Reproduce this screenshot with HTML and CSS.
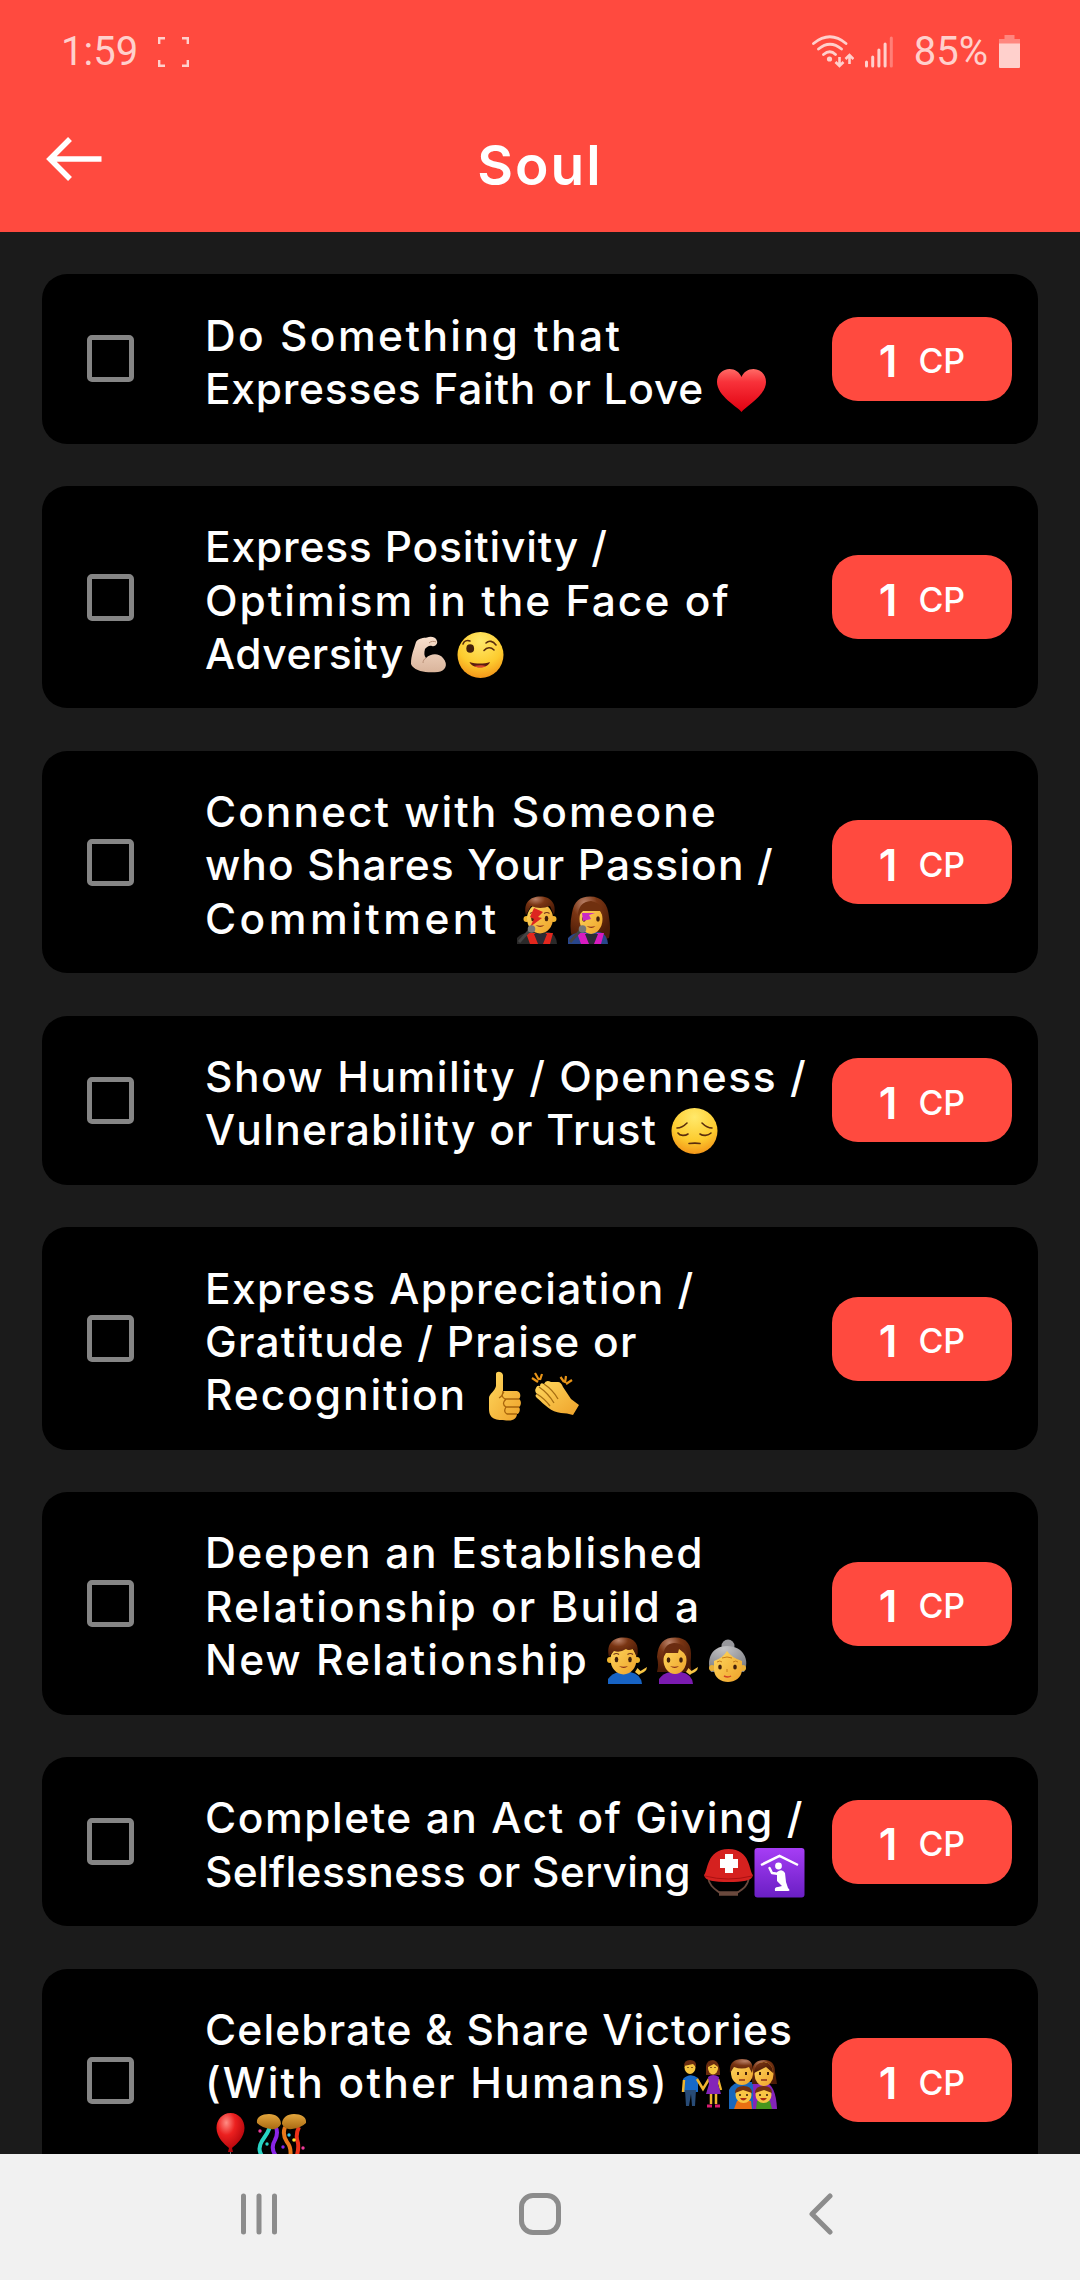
FILE: index.html
```html
<!DOCTYPE html>
<html lang="en">
<head>
<meta charset="utf-8">
<title>Soul</title>
<link rel="stylesheet" href="styles.css">
</head>
<body>
<svg class="defs" aria-hidden="true">
  <defs>
    <linearGradient id="g-heart" x1="0" y1="0" x2="0" y2="1"><stop offset="0" stop-color="#ff6b66"/><stop offset=".3" stop-color="#f8323a"/><stop offset="1" stop-color="#e10010"/></linearGradient>
    <radialGradient id="g-face" cx=".5" cy=".2" r=".85"><stop offset="0" stop-color="#ffe96b"/><stop offset=".6" stop-color="#fdcb2e"/><stop offset="1" stop-color="#f28d15"/></radialGradient>
    <linearGradient id="g-skin" x1="0" y1="0" x2="1" y2="1"><stop offset="0" stop-color="#ffd85e"/><stop offset="1" stop-color="#eea22a"/></linearGradient>
    <linearGradient id="g-pale" x1="0" y1="0" x2="0" y2="1"><stop offset="0" stop-color="#f9e0cd"/><stop offset="1" stop-color="#d9b49b"/></linearGradient>
    <radialGradient id="g-hair" cx=".35" cy=".15" r=".8"><stop offset="0" stop-color="#b98067"/><stop offset=".4" stop-color="#7a3513"/><stop offset="1" stop-color="#4d1c07"/></radialGradient>
    <radialGradient id="g-grey" cx=".4" cy=".1" r=".9"><stop offset="0" stop-color="#c4c4c6"/><stop offset="1" stop-color="#7c7d82"/></radialGradient>
    <linearGradient id="g-purple" x1="0" y1="0" x2="0" y2="1"><stop offset="0" stop-color="#a63df5"/><stop offset="1" stop-color="#6a1fc4"/></linearGradient>
    <radialGradient id="g-balloon" cx=".35" cy=".25" r=".8"><stop offset="0" stop-color="#ff8d84"/><stop offset=".4" stop-color="#ec201f"/><stop offset="1" stop-color="#a80008"/></radialGradient>
    <linearGradient id="g-gold" x1="0" y1="0" x2="0" y2="1"><stop offset="0" stop-color="#e3a63d"/><stop offset="1" stop-color="#a96a12"/></linearGradient>
  </defs>
  <symbol id="heart" viewBox="0 0 51 50"><path fill="url(#g-heart)" d="M25.500 47C22 42 1 31 1 17C1 9 7 4 13.500 4C19 4 23.500 7 25.500 12C27.500 7 32 4 37.500 4C44 4 50 9 50 17C50 31 29 42 25.500 47Z"/></symbol>
  <symbol id="biceps" viewBox="0 0 51 50"><path fill="url(#g-pale)" d="M7 34C7 25 10 19 12 12C14 8 20 8 23 7.500C27 6 32 7 33 11C34 14 31 17 28 16C25 15 23 17 21 19C20 23 20 26 22 28C27 23 35 23 39 28C45 35 41 41 34 42C24 43 13 42 8 36Z"/><path fill="none" stroke="#b78e76" d="M22 28C20 29 19 31 19 33M25 13c2-2 5-2 7-1"/></symbol>
  <symbol id="wink" viewBox="0 0 51 50"><circle cx="25.500" cy="25" r="23" fill="url(#g-face)"/><ellipse cx="15.200" cy="18.500" rx="3.900" ry="4.300" fill="#43200b"/><g fill="none" stroke="#5a2d0d" stroke-width="1.600" stroke-linecap="round"><path d="M8 14C9 11 12 10 15 11M31 13C34 10 38 11 41 15M29 20.500C32 17 36 17 39 20"/></g><path fill="#5b1d10" d="M14.500 32C21 34 29 34 35 32C33 39 17 39 14.500 32Z"/><path fill="#d9462f" d="M19 36C23 38 28 38 31 36C28 35 23 35 19 36Z"/></symbol>
  <symbol id="pensive" viewBox="0 0 51 50"><circle cx="25.500" cy="25" r="23" fill="url(#g-face)"/><g fill="none" stroke="#5a2d0d" stroke-width="1.600" stroke-linecap="round"><path d="M8 22C12 22 15 20 18 17M33 17C36 20 39 22 43 22M9 27C11 30 16 30 19 28M31 28C34 30 39 30 42 27M20 37.500C24 37 28 37 31 37.500"/></g></symbol>
  <symbol id="person-face" viewBox="0 0 51 50"><circle cx="9" cy="24" r="3" fill="#f0b52d"/><circle cx="36" cy="24" r="3" fill="#f0b52d"/><ellipse cx="22.500" cy="23.500" rx="13" ry="15" fill="url(#g-skin)"/><ellipse cx="15.500" cy="23.500" rx="1.800" ry="2.700" fill="#43200b"/><ellipse cx="29" cy="23.500" rx="1.800" ry="2.700" fill="#43200b"/><path fill="none" stroke="#72351b" stroke-width="1.200" d="M12.500 18.500q3-2 5.500 0M26.500 18.500q3-2 5.500 0"/><path fill="#8c2f18" d="M18 30q4.500 1.500 9 0q-4 4-9 0z"/></symbol>
  <symbol id="man-singer" viewBox="0 0 51 50"><path fill="#2a2929" d="M5 49V43Q9 38 19 37H37Q44 39 45 49Z"/><path fill="#e3271d" d="M14 38H23L28 49H18ZM41 38H34L29 49H38Z"/><path fill="#2b2b35" d="M22 39H35L31 49H26Z"/><use href="#person-face" x="5.500" width="51" height="50"/><path fill="url(#g-hair)" d="M14 20C11 8 18 1.500 28 1.500C39 1.500 45 9 42 20L38 11Q28 15 19 11Z"/><path fill="#dd2520" d="M22 13L31 17L26 22L30 23L18 32L22 24L18 22Z"/><path stroke="#444" stroke-width="3" d="M7 47L17 36"/><circle cx="19.500" cy="34" r="3.800" fill="#777"/></symbol>
  <symbol id="woman-singer" viewBox="0 0 51 50"><path fill="url(#g-hair)" d="M9 42Q6 32 9 18C11 6 17 1.500 27 1.500C39 1.500 45 9 46 22Q48 34 46 43L36 46H17Z"/><path fill="#28468b" d="M5 49V43Q9 38 19 37H37Q44 39 45 49Z"/><path fill="#d81bc0" d="M14 38H23L28 49H18ZM41 38H34L29 49H38Z"/><path fill="#2b2b35" d="M22 39H35L31 49H26Z"/><ellipse cx="28" cy="24" rx="11.500" ry="15" fill="url(#g-skin)"/><ellipse cx="21" cy="24" rx="1.800" ry="2.700" fill="#43200b"/><ellipse cx="35" cy="24" rx="1.800" ry="2.700" fill="#43200b"/><path fill="#8c2f18" d="M23.500 31q4.500 1.500 9 0q-4 4-9 0z"/><path fill="#70300f" d="M15 21Q15 7 28 6Q40 8 40 21L37 16H20Z"/><path fill="#c92bc4" d="M19 18H32L26 20L28 24L20 26Z"/><path stroke="#444" stroke-width="3" d="M7 47L17 36"/><circle cx="19.500" cy="34" r="3.800" fill="#777"/></symbol>
  <symbol id="thumb" viewBox="0 0 51 50"><path fill="url(#g-skin)" d="M17 3C17 0 23 0 24 4V20H38C42 21 42 26 40 28C43 30 42 35 40 36C42 39 40 43 38 43C38 47 34 50 29 49.500C20 49 10 50 10 38V27C10 23 16 20 17 15Z"/><path fill="none" stroke="#a8640b" stroke-width="1.300" d="M25 21Q21 25 26 28H40M27 28Q22 33 27 36H40M27 36Q24 41 28 43H38M24 20Q24 25 20 27"/></symbol>
  <symbol id="clap" viewBox="0 0 51 50"><path fill="url(#g-skin)" d="M6 17Q7 14 10 15Q10 11 14 13Q16 8 21 11L28 11Q31 11 33 16L41 28L49 34L43 44Q37 42 31 42C21 41 15 34 7 27Q4 24 7 23Q4 20 6 17Z"/><path fill="none" stroke="#a66d12" stroke-width="1.300" d="M7 23Q15 28 20 35M9 16Q18 22 24 32M14 13Q23 19 28 28"/><path stroke="#e89417" stroke-width="2.200" d="M2 7L8 11M5 2L9 9M12 3L10 9M30.500 6L34 11M36 5L35 12M42 9L36 13"/></symbol>
  <symbol id="man-tip" viewBox="0 0 51 50"><path fill="#1763c4" d="M7 48V43Q11 37 19 36H29Q40 38 41 48Z"/><use href="#person-face" width="51" height="50"/><path fill="url(#g-hair)" d="M8 21C5 8 12 1.500 22 1.500C34 1.500 39 9 36 21L32 13Q27 15 25 13Q19 17 13 15Z"/><path fill="#f7c544" d="M34 36L36.500 32L39.500 35L46 31Q46 34 43 36L39 38L38 39Z"/></symbol>
  <symbol id="woman-tip" viewBox="0 0 51 50"><path fill="url(#g-hair)" d="M5 36Q7 29 5 21C6 7 12 1.500 23 1.500C35 1.500 40 9 39 22Q38 31 40 36H5Z"/><path fill="#7b1bb0" d="M7 48V43Q11 37 19 36H29Q40 38 41 48Z"/><ellipse cx="23" cy="24" rx="11.500" ry="14" fill="url(#g-skin)"/><ellipse cx="16.500" cy="24" rx="1.800" ry="2.700" fill="#43200b"/><ellipse cx="29" cy="24" rx="1.800" ry="2.700" fill="#43200b"/><path fill="#8c2f18" d="M18 30q4.500 1.500 9 0q-4 4-9 0z"/><path fill="#6a2c10" d="M11 22Q11 8 22 7Q35 7 35 22L32 17L27 13L26 17H14Z"/><path fill="#f7c544" d="M34 36L36.500 32L39.500 35L46 31Q46 34 43 36L39 38L38 39Z"/></symbol>
  <symbol id="grandma" viewBox="0 0 51 50"><circle cx="25" cy="10" r="6.500" fill="#98989c"/><path fill="url(#g-grey)" d="M8 36C3 26 7 10 24 10C41 10 47 25 41 36Z"/><circle cx="9" cy="32" r="3" fill="#e9b038"/><circle cx="40" cy="32" r="3" fill="#e9b038"/><path fill="url(#g-skin)" d="M11 25Q20 22 24 15Q29 22 39 25V34C38 50 12 50 11 34Z"/><ellipse cx="17" cy="31" rx="1.800" ry="2.500" fill="#43200b"/><ellipse cx="32" cy="31" rx="1.800" ry="2.500" fill="#43200b"/><path fill="none" stroke="#c97e1a" d="M19 22q5-2 10 0M14 26q3-2 5 0M30 26q3-2 5 0M24 33v3"/><path fill="none" stroke="#d24326" stroke-width="1.500" d="M21 40q4 2 7 0"/></symbol>
  <symbol id="helmet" viewBox="0 0 51 50"><path fill="none" stroke="#69483c" stroke-width="1.800" d="M5 29C6 38 12 41 17 45H34C40 41 45 38 46 29"/><path stroke="#69483c" stroke-width="4.500" d="M16 45.500H35"/><path fill="#d5211f" d="M1 27C5 24 3 1 25.500 1C48 1 46 24 50 27C49 33 40 34 25.500 34C11 34 2 33 1 27Z"/><path fill="none" stroke="#ab1112" d="M2 28Q25 34 49 28"/><path fill="#fff" d="M22 6H30V11H35V20H30V25H22V20H17V11H22Z"/></symbol>
  <symbol id="worship" viewBox="0 0 51 50"><rect x=".5" width="50" height="49.500" rx="3" fill="url(#g-purple)"/><path fill="none" stroke="#fff" stroke-width="2.500" d="M7 17L25.500 8L44 17"/><circle cx="24.500" cy="18" r="3.400" fill="#fff"/><path fill="none" stroke="#fff" stroke-width="2.500" stroke-linecap="round" stroke-linejoin="round" d="M15.500 20L18 25L25 26"/><path fill="#fff" d="M23 24Q28 20 31 25L32 34L34 40Q37 43 34 43H21Q20 39 24 39L28 38L23 33Z"/></symbol>
  <symbol id="couple" viewBox="0 0 51 50"><path fill="#1769c7" d="M6 20Q13 13 21 19L21 33H7Z"/><path fill="#284b76" d="M8 31H19L18 47H15L14 35L12 47H9Z"/><path fill="none" stroke="#efb52f" stroke-width="2.500" d="M7 21L6 33M20 20L26 30L32 20M41 20L44 31"/><path fill="#8424b8" d="M31 18Q36 14 42 18L41 25L44 35H29L32 25Z"/><path stroke="#efb52f" stroke-width="2.500" d="M34 35V45M39 35V45"/><path stroke="#d71b70" stroke-width="3" d="M30 47H35M38 47H43"/><path fill="#6a2c10" d="M29 16V7Q30 1 36 1Q43 2 43 16Z"/><ellipse cx="13" cy="8.500" rx="5.500" ry="6.500" fill="#f6c53f"/><ellipse cx="36" cy="9" rx="5" ry="6.500" fill="#f6c53f"/><path fill="#6a2c10" d="M7 7Q7 1 13 1Q20 1 19 8L16 5ZM31 8Q31 2 36 2Q41 3 41 8L37 5Z"/><path stroke="#56280d" stroke-width="1.300" d="M11 8v1M15 8v1M34 8v1M38 8v1"/></symbol>
  <symbol id="family" viewBox="0 0 51 50"><path fill="#1867bd" d="M1 50V31Q5 23 14 23H25V50Z"/><path fill="#8424b8" d="M25 50V23H37Q48 26 49 50Z"/><path fill="url(#g-hair)" d="M24 25V12Q25 1 36 1Q47 1 47 13L49 25Z"/><ellipse cx="14" cy="14" rx="11" ry="12" fill="url(#g-skin)"/><ellipse cx="36" cy="15" rx="9.500" ry="12" fill="url(#g-skin)"/><path fill="url(#g-hair)" d="M2 14C1 4 6 0 14 0C23 0 26 5 24 14L21 8Q14 11 6 8ZM26 14Q27 3 36 3Q45 4 45 14L38 8Z"/><path stroke="#43200b" stroke-width="2" d="M10 13v3M18 13v3M32 13v3M40 13v3"/><path stroke="#8c2f18" stroke-width="1.500" d="M11 21h6M33 21h6"/><path fill="#e86f12" d="M6 50L9 42H23L24 50Z"/><path fill="#47951e" d="M28 50L29 42H42L44 50Z"/><circle cx="15.500" cy="36" r="8" fill="#f9c644"/><circle cx="35.500" cy="36" r="8" fill="#f9c644"/><path fill="#72300e" d="M7 34Q7 27 15.500 27Q24 27 24 34L15 31ZM27 34Q27 27 35.500 27Q44 27 44 34L36 31Z"/><path stroke="#43200b" stroke-width="1.600" d="M12 35v2M19 35v2M32 35v2M39 35v2"/><path fill="#a92c13" d="M12 39H19Q15 44 12 39ZM32 39H39Q35 44 32 39Z"/></symbol>
  <symbol id="balloon" viewBox="0 0 51 50"><path stroke="#777" stroke-width="1" d="M25.500 37V50"/><path fill="url(#g-balloon)" d="M25.500 0C34 0 39.500 7 39.500 15C39.500 24 32 31 27 35L28 39H23L24 35C19 31 11.500 24 11.500 15C11.500 7 17 0 25.500 0Z"/></symbol>
  <symbol id="confetti" viewBox="0 0 51 50"><path fill="none" stroke="#28d3c4" stroke-width="4" d="M15 12Q12 20 6 28Q1 36 6 43"/><path fill="none" stroke="#8a25e8" stroke-width="4" d="M19 13Q23 19 19 27Q14 35 20 43"/><path fill="none" stroke="#e9771a" stroke-width="4" d="M29 14Q26 22 31 29Q36 35 34 45"/><path fill="none" stroke="#ee3118" stroke-width="4" d="M43 14Q39 22 42 30Q43 37 40 45"/><path fill="url(#g-gold)" d="M1 10C0 4 6 1 13 1C20 1 25 5 25 11Q22 17 15 16Q6 15 1 10ZM50 10C51 4 45 1 38 1C31 1 26 5 26 11Q29 17 36 16Q45 15 50 10Z"/><g fill="#ef3b9b"><circle cx="4" cy="18" r="1.700"/><circle cx="47" cy="35" r="1.700"/></g><circle cx="33" cy="22" r="1.700" fill="#38c7ef"/><circle cx="38" cy="27" r="1.800" fill="#ffe02e"/><circle cx="11" cy="31" r="1.700" fill="#28d3c4"/><circle cx="27" cy="34" r="1.700" fill="#8a25e8"/></symbol>
</svg>

<div class="screen">
  <header class="header">
    <div class="status">
      <div class="status-left">
        <span class="time">1:59</span>
        <svg class="capture" viewBox="0 0 31 30"><path d="M1.200 7V1.200H7M24 1.200H29.800V7M29.800 23V28.800H24M7 28.800H1.200V23"/></svg>
      </div>
      <div class="status-right">
        <svg class="wifi" viewBox="0 0 42 33"><g fill="none" stroke="currentColor" stroke-width="2.800" stroke-linecap="round"><path d="M1.500 8.500Q18 -5 34 8.500M6.500 14Q18 4.500 29.500 14M11.500 19.500Q18 14 23.500 19.500"/></g><circle cx="17.500" cy="24" r="2.600" fill="currentColor"/><g fill="none" stroke="currentColor" stroke-width="2.600"><path d="M27.500 22V30M23.500 27L27.500 31L31.500 27M37.500 29V21M33.500 24L37.500 20L41.500 24"/></g></svg>
        <svg class="signal" viewBox="0 0 28 32"><path stroke="currentColor" stroke-width="3" stroke-linecap="round" d="M1.500 26V30M7.700 21V30M13.900 14V30M20.100 8V30"/><path stroke="currentColor" stroke-width="3" stroke-linecap="round" opacity=".4" d="M26.300 2V30"/></svg>
        <span class="charge">85%</span>
        <svg class="battery" viewBox="0 0 21 33"><path fill="currentColor" opacity=".45" d="M5.500 0H15.500V4H21V9H0V4H5.500Z"/><path fill="currentColor" d="M0 8.500H21V32Q21 33 20 33H1Q0 33 0 32Z"/></svg>
      </div>
    </div>
    <div class="appbar">
      <svg class="back" viewBox="0 0 56 44"><path d="M24 2L4 22L24 42M4 22H55.500"/></svg>
      <h1 class="title">Soul</h1>
    </div>
  </header>

  <main class="list">
    <article class="card"><span class="box"></span><div class="text">
      <div class="line"><span class="track-24">Do Something that</span></div>
      <div class="line"><span class="track-7">Expresses Faith or Love</span><svg class="emoji spaced"><use href="#heart"/></svg></div>
    </div><div class="badge"><b>1</b><span>CP</span></div></article>
    <article class="card"><span class="box"></span><div class="text">
      <div class="line"><span class="track-8">Express Positivity /</span></div>
      <div class="line"><span class="track-20">Optimism in the Face of</span></div>
      <div class="line"><span class="track-5">Adversity</span><svg class="emoji"><use href="#biceps"/></svg><svg class="emoji"><use href="#wink"/></svg></div>
    </div><div class="badge"><b>1</b><span>CP</span></div></article>
    <article class="card"><span class="box"></span><div class="text">
      <div class="line"><span class="track-20">Connect with Someone</span></div>
      <div class="line"><span class="track-11">who Shares Your Passion /</span></div>
      <div class="line"><span class="track-35">Commitment</span><svg class="emoji spaced"><use href="#man-singer"/></svg><svg class="emoji"><use href="#woman-singer"/></svg></div>
    </div><div class="badge"><b>1</b><span>CP</span></div></article>
    <article class="card"><span class="box"></span><div class="text">
      <div class="line"><span class="track-15">Show Humility / Openness /</span></div>
      <div class="line"><span class="track-12">Vulnerability or Trust</span><svg class="emoji spaced"><use href="#pensive"/></svg></div>
    </div><div class="badge"><b>1</b><span>CP</span></div></article>
    <article class="card"><span class="box"></span><div class="text">
      <div class="line"><span class="track-14">Express Appreciation /</span></div>
      <div class="line"><span class="track-12">Gratitude / Praise or</span></div>
      <div class="line"><span class="track-19">Recognition</span><svg class="emoji spaced"><use href="#thumb"/></svg><svg class="emoji"><use href="#clap"/></svg></div>
    </div><div class="badge"><b>1</b><span>CP</span></div></article>
    <article class="card"><span class="box"></span><div class="text">
      <div class="line"><span class="track-16">Deepen an Established</span></div>
      <div class="line"><span class="track-20">Relationship or Build a</span></div>
      <div class="line"><span class="track-20">New Relationship</span><svg class="emoji spaced"><use href="#man-tip"/></svg><svg class="emoji"><use href="#woman-tip"/></svg><svg class="emoji"><use href="#grandma"/></svg></div>
    </div><div class="badge"><b>1</b><span>CP</span></div></article>
    <article class="card"><span class="box"></span><div class="text">
      <div class="line"><span class="track-15">Complete an Act of Giving /</span></div>
      <div class="line"><span class="track-3">Selflessness or Serving</span><svg class="emoji spaced"><use href="#helmet"/></svg><svg class="emoji"><use href="#worship"/></svg></div>
    </div><div class="badge"><b>1</b><span>CP</span></div></article>
    <article class="card"><span class="box"></span><div class="text">
      <div class="line"><span class="track-11">Celebrate &amp; Share Victories</span></div>
      <div class="line"><span class="track-22">(With other Humans)</span><svg class="emoji close"><use href="#couple"/></svg><svg class="emoji"><use href="#family"/></svg></div>
      <div class="line"><svg class="emoji"><use href="#balloon"/></svg><svg class="emoji"><use href="#confetti"/></svg></div>
    </div><div class="badge"><b>1</b><span>CP</span></div></article>
  </main>

  <nav class="nav">
    <svg viewBox="0 0 42 42"><path d="M5.500 3V39M21 3V39M36.500 3V39"/></svg>
    <svg viewBox="0 0 42 42"><rect x="2.500" y="2.500" width="37" height="37" rx="11.500"/></svg>
    <svg viewBox="0 0 42 42"><path d="M30 3L12 21L30 39"/></svg>
  </nav>
</div>
</body>
</html>
```
FILE: styles.css
```css
* { box-sizing: border-box; }
body { margin: 0; background: #1b1b1b; font-family: Inter, "Liberation Sans", sans-serif; color: #fff; }
.defs { position: absolute; width: 0; height: 0; }
.screen { width: 1080px; height: 2280px; display: flex; flex-direction: column; overflow: hidden; }

.header { flex: none; height: 232px; background: #ff4a3f; }
.status { height: 104px; display: flex; justify-content: space-between; padding: 0 60px 0 61px; color: #ffd0cc; font-family: Roboto, sans-serif; font-size: 40px; line-height: 104px; }
.status-left, .status-right { display: flex; align-items: center; }
.capture { width: 31px; height: 30px; margin-left: 20px; fill: none; stroke: currentColor; stroke-width: 2.4; }
.wifi { width: 42px; height: 33px; margin-top: -2px; }
.signal { width: 28px; height: 32px; margin-left: 11px; }
.charge { margin-left: 21px; }
.battery { width: 21px; height: 33px; margin-left: 11px; margin-top: -2px; }
.appbar { height: 128px; display: grid; grid-template-columns: 1fr auto 1fr; padding: 0 46px; }
.back { width: 56px; height: 44px; margin-top: 33px; fill: none; stroke: #fff; stroke-width: 5.5; }
.title { margin: 27px 0 0; font-size: 55px; line-height: 68px; font-weight: 600; letter-spacing: 2px; }

.list { flex: 1; min-height: 0; overflow: hidden; display: flex; flex-direction: column; gap: 42.4px; padding: 42.4px 42px 0; }
.card { flex: none; display: flex; align-items: center; padding: 31.2px 26px 31.2px 45px; background: #000; border-radius: 25px; }
.box { flex: none; width: 47px; height: 47px; border: 5px solid #858585; border-radius: 5px; }
.text { flex: none; width: 601px; margin-left: 71px; overflow-x: clip; }
.line { display: flex; height: 53.4px; font-size: 42.5px; line-height: 53.4px; font-weight: 500; white-space: nowrap; }
.line span { padding-top: 3px; }

/* Letter tracking steps, in tenths of a pixel */
.track-3 { letter-spacing: 0.33px; }
.track-5 { letter-spacing: 0.47px; }
.track-7 { letter-spacing: 0.72px; }
.track-8 { letter-spacing: 0.8px; }
.track-11 { letter-spacing: 1.13px; }
.track-12 { letter-spacing: 1.24px; }
.track-14 { letter-spacing: 1.37px; }
.track-15 { letter-spacing: 1.53px; }
.track-16 { letter-spacing: 1.65px; }
.track-19 { letter-spacing: 1.9px; }
.track-20 { letter-spacing: 2.01px; }
.track-22 { letter-spacing: 2.2px; }
.track-24 { letter-spacing: 2.42px; }
.track-35 { letter-spacing: 3.45px; }

.emoji { flex: none; width: 51px; height: 50px; margin-top: 6px; overflow: visible; }
.spaced { margin-left: 12px; }
.close { margin-left: 8px; }
.badge { flex: none; width: 180px; height: 84px; margin-left: auto; display: flex; align-items: center; justify-content: center; gap: 21px; padding-top: 5px; background: #ff4a3f; border-radius: 26px; }
.badge b { font-size: 44px; font-weight: 600; line-height: 56px; }
.badge span { font-size: 34px; font-weight: 500; line-height: 56px; }

.nav { flex: none; height: 126px; display: flex; justify-content: space-between; padding: 39px 238px 0; background: #f1f1f1; }
.nav svg { width: 42px; height: 42px; fill: none; stroke: #8c8c8c; stroke-width: 5; stroke-linecap: round; stroke-linejoin: round; }
```
